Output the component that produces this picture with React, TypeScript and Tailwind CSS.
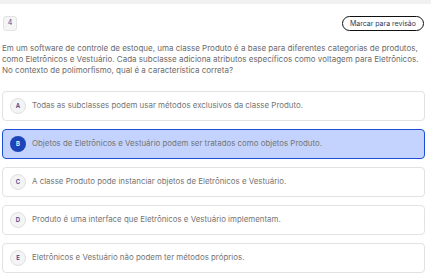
const OPTIONS = [
  { key: 'A', text: 'Todas as subclasses podem usar métodos exclusivos da classe Produto.' },
  { key: 'B', text: 'Objetos de Eletrônicos e Vestuário podem ser tratados como objetos Produto.' },
  { key: 'C', text: 'A classe Produto pode instanciar objetos de Eletrônicos e Vestuário.' },
  { key: 'D', text: 'Produto é uma interface que Eletrônicos e Vestuário implementam.' },
  { key: 'E', text: 'Eletrônicos e Vestuário não podem ter métodos próprios.' },
]

export default function App() {
  const selected = 'B'
  return (
    <div className="h-[273px] w-[431px] overflow-hidden bg-white font-['Inter',sans-serif]">
      <div className="h-[4px] bg-[#f1f1f1]" />
      <div className="px-[2px] pt-[12px]">
        <div className="flex items-center justify-between pl-[1px] pr-[5px]">
          <span className="flex h-[15px] w-[14px] items-center justify-center rounded-[3px] border border-[#e3e3e3] bg-[#f5f5f5] text-[7px] text-[#4b4f9a]">
            4
          </span>
          <button
            type="button"
            className="h-[15px] rounded-full border border-[#111] px-[7px] text-[7px] leading-none text-[#1f3a5f]"
          >
            Marcar para revisão
          </button>
        </div>

        <p className="mt-[12px] text-[8px] leading-[11px] text-[#6b6b6b]">
          Em um software de controle de estoque, uma classe Produto é a base para diferentes categorias de produtos,
          como Eletrônicos e Vestuário. Cada subclasse adiciona atributos específicos como voltagem para Eletrônicos.
          No contexto de polimorfismo, qual é a característica correta?
        </p>

        <ul className="mt-[15px] flex w-[423px] flex-col gap-[8.5px]">
          {OPTIONS.map((opt) => {
            const active = opt.key === selected
            return (
              <li
                key={opt.key}
                className={`flex h-[29.5px] items-center gap-[6px] rounded-[4px] border px-[7px] ${
                  active ? 'border-[#1d4ed8] bg-[#c3d3fd]' : 'border-[#e2e2e2] bg-white'
                }`}
              >
                <span
                  className={`flex h-[16px] w-[16px] shrink-0 items-center justify-center rounded-full text-[6px] font-semibold ${
                    active ? 'bg-[#1d44b8] text-white' : 'border border-[#e0e0e0] bg-[#f4f4f4] text-[#3b3f8f]'
                  }`}
                >
                  {opt.key}
                </span>
                <span className="text-[7.9px] text-[#757575]">{opt.text}</span>
              </li>
            )
          })}
        </ul>
      </div>
    </div>
  )
}
